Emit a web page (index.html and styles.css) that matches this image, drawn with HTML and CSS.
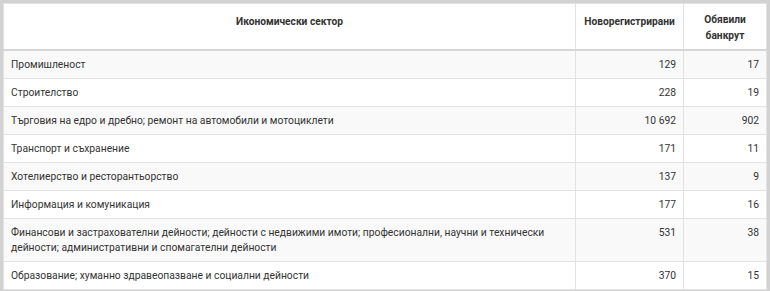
FILE: index.html
```html
<!DOCTYPE html>
<html lang="bg">
<head>
<meta charset="utf-8">
<link rel="stylesheet" href="styles.css">
</head>
<body>
<div class="frame">
<table class="data">
  <colgroup>
    <col class="c-sector">
    <col class="c-new">
    <col class="c-bank">
  </colgroup>
  <thead>
    <tr>
      <th>Икономически сектор</th>
      <th>Новорегистрирани</th>
      <th>Обявили банкрут</th>
    </tr>
  </thead>
  <tbody>
    <tr><td>Промишленост</td><td class="num">129</td><td class="num">17</td></tr>
    <tr><td>Строителство</td><td class="num">228</td><td class="num">19</td></tr>
    <tr><td>Търговия на едро и дребно; ремонт на автомобили и мотоциклети</td><td class="num">10 692</td><td class="num">902</td></tr>
    <tr><td>Транспорт и съхранение</td><td class="num">171</td><td class="num">11</td></tr>
    <tr><td>Хотелиерство и ресторантьорство</td><td class="num">137</td><td class="num">9</td></tr>
    <tr><td>Информация и комуникация</td><td class="num">177</td><td class="num">16</td></tr>
    <tr><td>Финансови и застрахователни дейности; дейности с недвижими имоти; професионални, научни и технически дейности; административни и спомагателни дейности</td><td class="num">531</td><td class="num">38</td></tr>
    <tr><td>Образование; хуманно здравеопазване и социални дейности</td><td class="num">370</td><td class="num">15</td></tr>
  </tbody>
</table>
</div>
</body>
</html>
```

FILE: styles.css
```css
html, body {
  margin: 0;
  padding: 0;
}
body {
  background: #d2d2d2;
  font-family: Roboto, "Liberation Sans", sans-serif;
  font-size: 10.3px;
  color: #333;
}
.frame {
  padding: 3px 4px 3px 3px;
  height: 285px;
  box-sizing: content-box;
}
.data {
  width: 763px;
  border-collapse: collapse;
  background: #fff;
  border: 1px solid #ddd;
  table-layout: fixed;
}
.c-sector { width: 572px; }
.c-new { width: 108px; }
.c-bank { width: 83px; }
.data th,
.data td {
  border: 1px solid #e2e2e2;
  line-height: 15px;
  padding: 6px 7px;
  vertical-align: top;
  text-align: left;
}
.data th {
  font-size: 10.2px;
  font-weight: bold;
  text-align: center;
  padding: 8px 6px 5px;
  line-height: 16px;
  border-bottom: 2px solid #d6d6d6;
  color: #333;
}
.data th:first-child,
.data th:nth-child(2) {
  padding-top: 10px;
}
.data td.num {
  text-align: right;
}
.data tbody tr:nth-child(odd) td {
  background: #f9f9f9;
}
```
